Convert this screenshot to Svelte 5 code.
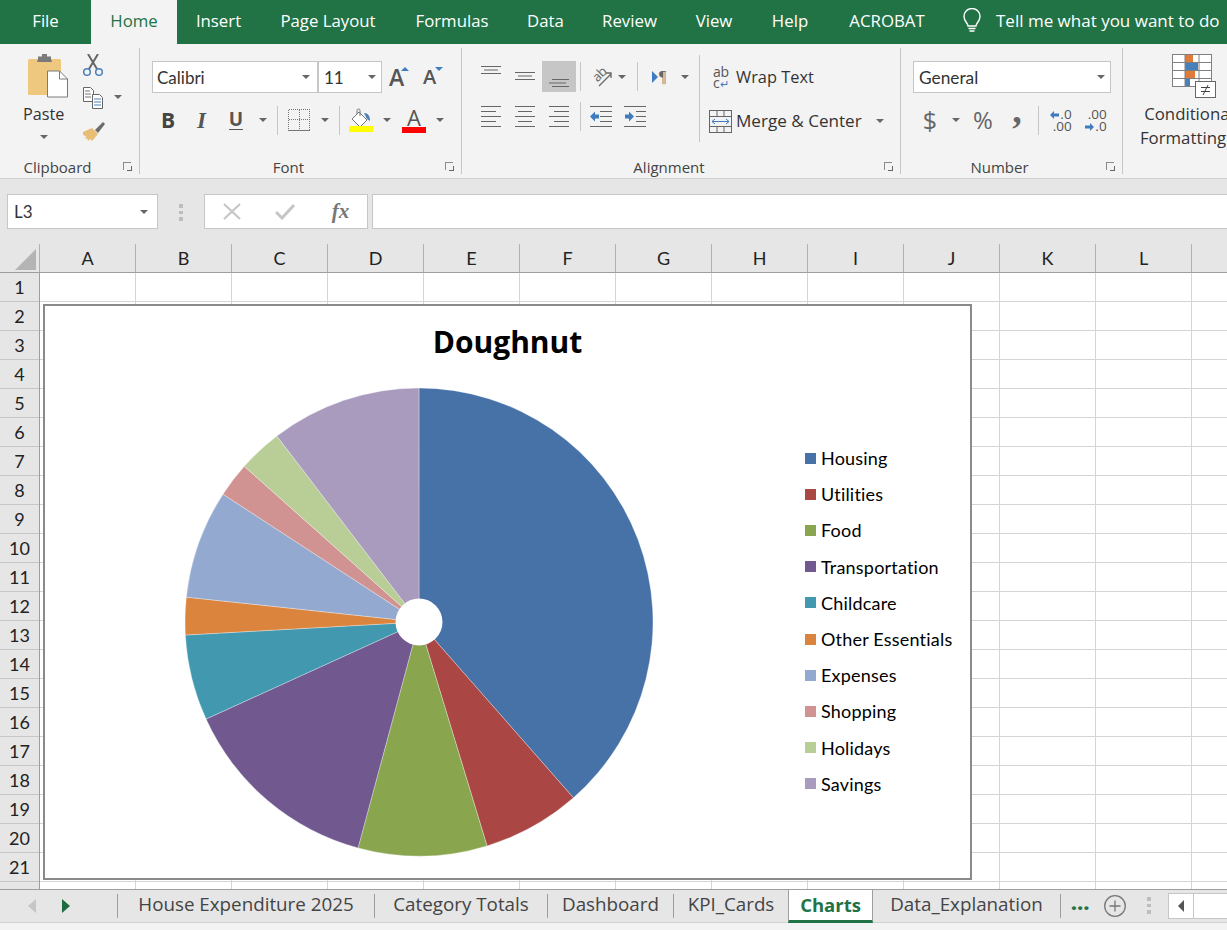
<script>
  const tabs = ['File','Home','Insert','Page Layout','Formulas','Data','Review','View','Help','ACROBAT'];
  const cols = 'ABCDEFGHIJKL'.split('');
  const rows = Array.from({length:21},(_,i)=>i+1);
  const slices = [
    ['Housing','#4672a8',138.7],['Utilities','#aa4643',163.1],['Food','#89a54e',195.1],
    ['Transportation','#71588f',245.5],['Childcare','#4198af',266.8],['Other Essentials','#db843d',276.1],
    ['Expenses','#93a9cf',303.1],['Shopping','#d19392',311.7],['Holidays','#b9cd96',322.6],['Savings','#a99bbd',360]
  ];
  const R = 234, cx = 376, cy = 318;
  const pt = a => { const r = a*Math.PI/180; return `${(cx+R*Math.sin(r)).toFixed(2)} ${(cy-R*Math.cos(r)).toFixed(2)}`; };
  const wedges = slices.map((s,i)=>{
    const from = i ? slices[i-1][2] : 0, to = s[2];
    const end = to===360 ? 359.99 : to;
    return { name:s[0], color:s[1], d:`M${cx} ${cy}L${pt(from)}A${R} ${R} 0 ${end-from>180?1:0} 1 ${pt(end)}Z` };
  });
  const sheets = [
    ['House Expenditure 2025','w257'],['Category Totals','w173'],['Dashboard','w126'],['KPI_Cards','w115']
  ];
</script>

<div class="app">
  <nav class="tabs">
    {#each tabs as t}
      <div class="tab" class:active={t==='Home'}>{t}</div>
    {/each}
    <div class="tell">
      <svg width="22" height="26" viewBox="0 0 22 26" fill="none" stroke="#fff" stroke-width="1.4"><path d="M7 18c0-3-4-4.500-4-9.500a8 8 0 0 1 16 0C19 13.500 15 15 15 18Z"/><path d="M7.500 20.500h7M8.500 23h5"/></svg>
      <span>Tell me what you want to do</span>
    </div>
  </nav>

  <section class="ribbon">
    <div class="group g-clip">
      <div class="gbody clip-body">
        <div class="paste">
          <svg width="42" height="44" viewBox="0 0 42 44"><rect x="1" y="5" width="33" height="36" rx="1.500" fill="#edc87e"/><path d="M11 5V2.500h4V0h5v2.500h4V5l1 3H10Z" fill="#7a7a7a"/><path d="M20.500 17h12l8 8v18h-20Z" fill="#fff" stroke="#7a7a7a" stroke-width="1"/><path d="M32.500 17v8h8" fill="none" stroke="#7a7a7a"/></svg>
          <span class="t15">Paste</span>
          <i class="dd"></i>
        </div>
        <div class="clip-tools">
          <svg width="22" height="22" viewBox="0 0 22 22" fill="none"><path d="M6 0l9 15M16 0L7 15" stroke="#666" stroke-width="2"/><circle cx="5" cy="18" r="3.300" stroke="#4a80ba" stroke-width="1.500"/><circle cx="17" cy="18" r="3.300" stroke="#4a80ba" stroke-width="1.500"/></svg>
          <div class="copy">
            <svg width="22" height="22" viewBox="0 0 22 22" fill="#fff" stroke="#666"><path d="M1.500.5h7l3 3v11h-10Z"/><path d="M3 4h5M3 7h6M3 10h6" stroke-width=".9"/><path d="M10.500 7.500h7l3 3v11h-10Z"/><path d="M12 12h7M12 15h7M12 18h7" stroke="#4a80ba"/></svg>
            <i class="dd"></i>
          </div>
          <svg class="brush" width="24" height="21" viewBox="0 0 24 21"><path d="M1 11l9-4 6 6-6 7-2-2-2 2-1-3-2 1 1-3-3-1Z" fill="#e9bd73"/><path d="M13 9l8-8 2 2-7 9Z" fill="#6b6b6b"/></svg>
        </div>
      </div>
      <footer class="glabel"><span>Clipboard</span><b class="launch"></b></footer>
    </div>

    <div class="group g-font">
      <div class="gbody">
        <div class="font-top">
          <div class="box fname"><span class="cal">Calibri</span><i class="dd"></i></div>
          <div class="box fsize"><span class="cal">11</span><i class="dd"></i></div>
          <div class="grow">A<b class="up"></b></div>
          <div class="shrink">A<b class="down"></b></div>
        </div>
        <div class="font-bot">
          <span class="fb b">B</span>
          <span class="fb it">I</span>
          <span class="fb un">U</span>
          <i class="dd"></i>
          <u class="sep"></u>
          <svg width="22" height="22" viewBox="0 0 22 22" fill="none" stroke="#777" stroke-dasharray="1 1" shape-rendering="crispEdges"><path d="M.5.500h21v20M.5.500v20M11 .5v20M.5 10.500h21"/><path d="M0 21.500h22" stroke-dasharray="none"/></svg>
          <i class="dd"></i>
          <u class="sep"></u>
          <svg width="24" height="24" viewBox="0 0 24 24"><path d="M10 4l8 8-7 7-8-8Z" fill="#fff" stroke="#777"/><path d="M8 6V2.500a1.500 1.500 0 0 1 3 0V8" fill="none" stroke="#777"/><path d="M15 5c4 0 6 3 6 8l-3-2Z" fill="#4a80ba"/><rect y="18" width="24" height="6" fill="#ff0"/></svg>
          <i class="dd"></i>
          <div class="fcolor">A<b></b></div>
          <i class="dd"></i>
        </div>
      </div>
      <footer class="glabel"><span>Font</span><b class="launch"></b></footer>
    </div>

    <div class="group g-align">
      <div class="gbody align-body">
        <div class="align-left">
          <div class="al-top">
            <svg width="20" height="10" viewBox="0 0 20 10" stroke="#666"><path d="M0 1.500h20M3 5h14M0 8.500h20"/></svg>
            <svg width="20" height="10" class="lower1" viewBox="0 0 20 10" stroke="#666"><path d="M0 1.500h20M3 5h14M0 8.500h20"/></svg>
            <div class="al-active"><svg width="20" height="10" viewBox="0 0 20 10" stroke="#666"><path d="M3 1.500h17M0 5h17M3 8.500h17"/></svg></div>
            <u class="sep"></u>
            <div class="orient">
              <span>ab</span>
              <svg width="20" height="20" viewBox="0 0 20 20" fill="none" stroke="#666" stroke-width="1.300"><path d="M7 19L19 7M14 6h5v5"/></svg>
            </div>
            <i class="dd"></i>
            <u class="sep"></u>
            <div class="rtl"><b></b>¶</div>
            <i class="dd"></i>
          </div>
          <div class="al-bot">
            <svg width="20" height="22" viewBox="0 0 20 22" stroke="#666"><path d="M0 .5h20M0 5.500h15M0 10.500h20M0 15.500h15M0 20.500h20"/></svg>
            <svg width="20" height="22" viewBox="0 0 20 22" stroke="#666"><path d="M0 .5h20M3 5.500h14M0 10.500h20M3 15.500h14M0 20.500h20"/></svg>
            <svg width="20" height="22" viewBox="0 0 20 22" stroke="#666"><path d="M0 .5h20M5 5.500h15M0 10.500h20M5 15.500h15M0 20.500h20"/></svg>
            <u class="sep"></u>
            <svg width="22" height="22" viewBox="0 0 22 22"><path d="M0 .5h22M10 5.500h12M10 10.500h12M10 15.500h12M0 20.500h22" stroke="#666"/><path d="M0 10.500l5-5v3h4v4H5v3Z" fill="#3f7cbf"/></svg>
            <svg width="22" height="22" viewBox="0 0 22 22"><path d="M0 .5h22M12 5.500h10M12 10.500h10M12 15.500h10M0 20.500h22" stroke="#666"/><path d="M10 10.500l-5-5v3H1v4h4v3Z" fill="#3f7cbf"/></svg>
          </div>
        </div>
        <u class="sep tall"></u>
        <div class="align-right">
          <div class="wrap">
            <span class="abc">ab<br>c<em>↵</em></span>
            <span class="t15 wt">Wrap Text</span>
          </div>
          <div class="merge">
            <svg width="23" height="23" viewBox="0 0 23 23" fill="none" stroke="#666"><rect x=".5" y=".5" width="22" height="22"/><path d="M0 6.500h23M0 16.500h23M8 0v6M15 0v6M8 17v6M15 17v6"/><path d="M3 11.500h17M3 11.500l3-2.500M3 11.500l3 2.500M20 11.500l-3-2.500M20 11.500l-3 2.500" stroke="#3f7cbf"/></svg>
            <span class="t15 mt">Merge &amp; Center</span>
            <i class="dd"></i>
          </div>
        </div>
      </div>
      <footer class="glabel"><span>Alignment</span><b class="launch"></b></footer>
    </div>

    <div class="group g-num">
      <div class="gbody">
        <div class="box general"><span class="gen">General</span><i class="dd"></i></div>
        <div class="num-bot">
          <span class="sym dollar">$</span>
          <i class="dd"></i>
          <span class="sym pct">%</span>
          <span class="sym comma">,</span>
          <u class="sep"></u>
          <div class="dec"><span><svg width="9" height="8" viewBox="0 0 9 8"><path d="M0 4l4-4v2.500h5v3H4V8Z" fill="#3f7cbf"/></svg>.0</span><span>.00</span></div>
          <div class="dec"><span>.00</span><span><svg width="9" height="8" viewBox="0 0 9 8"><path d="M9 4L5 0v2.500H0v3h5V8Z" fill="#3f7cbf"/></svg>.0</span></div>
        </div>
      </div>
      <footer class="glabel"><span>Number</span><b class="launch"></b></footer>
    </div>

    <div class="g-style">
      <svg width="46" height="46" viewBox="0 0 46 46" fill="none">
        <rect x=".5" y=".5" width="39" height="32" fill="#fff" stroke="#808080"/>
        <rect x="13" y="1" width="8" height="7" fill="#e07b39"/><rect x="13" y="9" width="13" height="7" fill="#4a80ba"/><rect x="13" y="17" width="10" height="7" fill="#e07b39"/><rect x="13" y="25" width="5" height="7" fill="#4a80ba"/>
        <path d="M0 8.500h40M0 16.500h40M0 24.500h40M13 0v33M27 0v33" stroke="#808080"/>
        <rect x="23.500" y="27.500" width="20" height="16" fill="#fff" stroke="#666"/>
        <path d="M29 33.500h9M29 37.500h9M31 41l5-10" stroke="#444"/>
      </svg>
      <span class="t15 cf1">Conditional</span>
      <span class="t15 cf2">Formatting</span>
    </div>
  </section>

  <section class="fbar">
    <div class="box namebox"><span>L3</span><i class="dd"></i></div>
    <div class="grip"><i></i><i></i><i></i></div>
    <div class="fxbox">
      <svg width="20" height="18" viewBox="0 0 20 18" stroke="#c6c6c6" stroke-width="2.200"><path d="M2 1l16 15M18 1L2 16"/></svg>
      <svg width="20" height="16" viewBox="0 0 20 16" fill="none" stroke="#c6c6c6" stroke-width="3"><path d="M1 8l6 6L19 1"/></svg>
      <span class="fx">fx</span>
    </div>
    <div class="finput"></div>
  </section>

  <div class="colhead">
    <div class="corner"><b></b></div>
    {#each cols as c}<div class="ch">{c}</div>{/each}
    <div class="ch"></div>
  </div>

  <main class="sheet">
    <div class="rowhead">
      {#each rows as r}<div class="rh">{r}</div>{/each}
    </div>
    <div class="cells">
      <article class="chart">
        <h1>Doughnut</h1>
        <svg class="pie" width="929" height="575" viewBox="0 0 929 575">
          {#each wedges as w}<path d={w.d} fill={w.color} stroke="#fff" stroke-opacity=".45" stroke-width=".7"/>{/each}
          <circle cx={cx} cy={cy} r="23.500" fill="#fff"/>
        </svg>
        <ul class="legend">
          {#each wedges as w}
            <li><i style:background={w.color}></i>{w.name}</li>
          {/each}
        </ul>
      </article>
    </div>
  </main>

  <footer class="sheets">
    <div class="nav">
      <svg width="8" height="14" viewBox="0 0 8 14"><path d="M8 0v14L0 7Z" fill="#c6c6c6"/></svg>
      <svg width="8" height="14" viewBox="0 0 8 14"><path d="M0 0v14l8-7Z" fill="#1e6b41"/></svg>
    </div>
    {#each sheets as s}<div class="st {s[1]}">{s[0]}</div>{/each}
    <div class="st current">Charts</div>
    <div class="st w188">Data_Explanation</div>
    <div class="more">...</div>
    <svg class="plus" width="22" height="22" viewBox="0 0 22 22" fill="none" stroke="#777" stroke-width="1.300"><circle cx="11" cy="11" r="10.300"/><path d="M11 5.500v11M5.500 11h11"/></svg>
    <div class="grip g2"><i></i><i></i><i></i></div>
    <div class="hscroll"><span class="sl"><svg width="6" height="12" viewBox="0 0 6 12"><path d="M6 0v12L0 6Z" fill="#555"/></svg></span><span class="thumb"></span></div>
  </footer>
  <div class="status"></div>
</div>

<style>
  :global(body){margin:0;background:#fff}
  .app{width:1227px;height:930px;overflow:hidden;display:flex;flex-direction:column;font-family:"Open Sans","Noto Sans",sans-serif;color:#333}
  .tabs{display:grid;grid-template-columns:91px 86px 83px 136px 112px 75px 93px 76px 76px 118px 1fr;height:44px;background:#217346;flex:none}
  .tab{display:flex;align-items:center;justify-content:center;color:#fff;font-size:16.800px;padding-bottom:3px;box-sizing:border-box;white-space:nowrap}
  .tab.active{background:#f3f3f3;color:#217346}
  .tell{display:flex;align-items:center;gap:13px;padding-left:15px;color:#fff;font-size:17px;white-space:nowrap;padding-bottom:3px;overflow:hidden}

  .ribbon{display:flex;flex:none;background:#f3f3f3;border-bottom:1px solid #d2d2d2;padding-top:4px;box-sizing:content-box;height:130px;overflow:hidden}
  .group{display:flex;flex-direction:column;border-right:1px solid #c6c6c6;height:126px;box-sizing:content-box;flex:none}
  .gbody{height:108px;box-sizing:border-box;flex:none}
  .glabel{display:flex;align-items:center;height:22px;font-size:15px;color:#444;flex:none}
  .glabel span{flex:1;text-align:center}
  .launch{width:24px;height:22px;position:relative;flex:none}
  .launch::before{content:"";position:absolute;left:8px;top:6px;width:7px;height:7px;border:solid #8a8a8a;border-width:1px 0 0 1px}
  .launch::after{content:"";position:absolute;left:12px;top:10px;width:4px;height:4px;border:solid #666;border-width:0 1px 1px 0}
  .dd{display:block;width:0;height:0;border:4px solid transparent;border-top:4px solid #666;border-bottom:0;flex:none}
  .t15{font-size:16.800px;color:#333;white-space:nowrap;line-height:24px}
  .wt{font-size:16.400px}
  .mt{font-size:17.100px}
  .sep{display:block;width:1px;height:29px;background:#c6c6c6;justify-self:center;text-decoration:none}
  .box{display:flex;align-items:center;justify-content:space-between;background:#fff;border:1px solid #c6c6c6;box-sizing:border-box}
  .cal{font-family:Lato,"Liberation Sans",sans-serif}

  .g-clip{width:139px}
  .clip-body{display:flex;padding:6px 0 0 23px}
  .paste{display:flex;flex-direction:column;align-items:flex-start;width:59px}
  .paste svg{margin-left:4px;flex:none}
  .paste span{margin-top:4px;font-size:16.200px}
  .paste .dd{margin:9px 0 0 17px}
  .clip-tools{display:flex;flex-direction:column;gap:11px;align-items:flex-start}
  .copy{display:flex;align-items:center;gap:10px}
  .copy .dd{margin-top:-3px}
  .brush{margin-top:1px}

  .g-font{padding-left:12px;width:309px}
  .g-font .glabel,.g-num .glabel{margin-left:-12px}
  .font-top{display:flex;padding-top:13px;align-items:center;height:32px;box-sizing:content-box}
  .fname{width:166px;height:32px;padding:0 7px 0 4px;font-size:17px}
  .fsize{width:64px;height:32px;padding:0 5px;font-size:17px}
  .grow,.shrink{position:relative;font-weight:600;color:#555}
  .grow{font-size:23px;margin-left:7px;width:33px;line-height:30px}
  .shrink{font-size:20px;margin-left:1px;line-height:30px}
  .up,.down{position:absolute;left:12px;top:5px;border:4px solid transparent}
  .up{border-bottom:4px solid #3f7cbf;border-top:0}
  .down{border-top:4px solid #3f7cbf;border-bottom:0}
  .font-bot{display:grid;grid-template-columns:32px 35px 34px 19px 10px 33px 19px 10px 34px 18px 36px 16px;place-items:center;height:30px;margin-top:12px}
  .fb{font-size:21px;color:#555;line-height:1}
  .b{font-weight:700;color:#444}
  .it{font-family:"Liberation Serif",serif;font-style:italic;font-weight:700;font-size:23px}
  .un{font-weight:700;border-bottom:1.500px solid #555;line-height:19px;font-size:19px}
  .fcolor{display:flex;flex-direction:column;align-items:center;font-size:22px;line-height:20px;font-weight:500;color:#555}
  .fcolor b{width:24px;height:6px;background:#f00;display:block}

  .g-align{width:438px}
  .align-body{display:flex;padding-left:12px}
  .align-left{width:225px}
  .al-top{display:grid;grid-template-columns:34px 34px 34px 8px 8px 20px 20px 10px 34px 18px;place-items:center;height:31px;margin-top:13px}
  .al-top>svg:first-child{margin-top:-14px}
  .lower1{margin-top:-1px}
  .orient{grid-column:6;position:relative;width:20px;height:20px}
  .orient span{position:absolute;left:0;top:0;font-size:13px;line-height:14px;color:#666;transform:rotate(-45deg);letter-spacing:-.5px;transform-origin:50% 50%}
  .orient svg{position:absolute;left:0;top:0}
  .al-active{width:34px;height:31px;background:#c6c6c6;display:flex;align-items:center;justify-content:center;padding-top:12px;box-sizing:border-box}
  .rtl{display:flex;align-items:center;gap:1px;font-size:16px;color:#666;font-family:"Liberation Serif",serif}
  .rtl b{border:solid transparent;border-width:6px 0 6px 6px;border-left-color:#3f7cbf}
  .al-bot{display:grid;grid-template-columns:34px 34px 34px 8px 34px 34px;place-items:center;height:26px;margin-top:10px}
  .sep.tall{height:87px;margin:7px 0 0 0;align-self:flex-start}
  .align-right{padding:13px 0 0 9px;display:flex;flex-direction:column}
  .wrap{display:flex;align-items:center;height:32px;padding-left:4px;gap:7px}
  .abc{font-size:14px;line-height:11px;color:#555;width:16px;white-space:nowrap;letter-spacing:-.2px}
  .abc em{font-style:normal;color:#3f7cbf;font-size:11px}
  .merge{display:flex;align-items:center;height:32px;margin-top:12px;gap:4px}
  .merge .dd{margin-left:10px}

  .g-num{padding-left:12px;width:209px}
  .general{width:198px;height:32px;margin-top:13px;padding:0 5px;font-size:17.300px}
  .gen{font-family:Lato,sans-serif}
  .num-bot{display:grid;grid-template-columns:34px 18px 36px 32px 10px 36px 34px;place-items:center;height:30px;margin-top:12px}
  .sym{font-size:25px;color:#666;line-height:1}
  .pct{font-size:24px}
  .comma{font-weight:700;font-size:38px;line-height:30px;margin-top:-20px;font-family:"Liberation Serif",serif}
  .dec{display:flex;flex-direction:column;align-items:flex-end;font-size:13.500px;line-height:12px;color:#555}
  .dec svg{margin-right:1px}

  .g-style{flex:none;display:flex;flex-direction:column;align-items:center;width:124px;padding-top:6px}
  .g-style svg{margin:0 0 2px 19px;flex:none}
  .cf1{margin-left:8px}
  .cf2{margin-left:-4px}

  .fbar{display:flex;height:65px;flex:none;background:#e6e6e6;padding:15px 0 0 7px;box-sizing:border-box;align-items:flex-start}
  .namebox{width:151px;height:35px;padding:0 9px 0 6px;font-family:Lato,sans-serif;font-size:17px;color:#333}
  .grip{display:flex;flex-direction:column;gap:3px;width:46px;align-items:center;padding-top:10px}
  .grip i{width:3.500px;height:3.500px;background:#bdbdbd;display:block}
  .fxbox{display:grid;grid-template-columns:53px 54px 57px;place-items:center;width:164px;height:35px;box-sizing:border-box;background:#fff;border:1px solid #c6c6c6}
  .fx{font-family:"Liberation Serif",serif;font-style:italic;font-size:21px;color:#777;font-weight:700}
  .finput{flex:1;height:35px;margin-left:4px;background:#fff;border:1px solid #c6c6c6;box-sizing:border-box;border-right:0}

  .colhead{display:grid;grid-template-columns:40px repeat(13,96px);flex:none;background:#e6e6e6;border-bottom:1px solid #9e9e9e;height:28px}
  .corner{position:relative;border-right:1px solid #b1b1b1;box-sizing:border-box}
  .corner b{position:absolute;right:3px;bottom:2px;width:0;height:0;border-style:solid;border-width:0 0 21px 21px;border-color:transparent transparent #b4b4b4 transparent}
  .ch{display:flex;align-items:center;justify-content:center;border-right:1px solid #b1b1b1;box-sizing:border-box;font:18px Lato,sans-serif;color:#222}

  .sheet{display:flex;flex:1;min-height:0;overflow:hidden}
  .rowhead{width:40px;flex:none;background:#e6e6e6;border-right:1px solid #9e9e9e;box-sizing:border-box}
  .rh{height:29px;display:flex;align-items:center;justify-content:center;box-sizing:border-box;border-bottom:1px solid #c6c6c6;font:18px Lato,sans-serif;color:#222}
  .cells{flex:1;position:relative;background-color:#fff;background-image:linear-gradient(to left,#d4d4d4 1px,transparent 1px),linear-gradient(to top,#d4d4d4 1px,transparent 1px);background-size:96px 100%,100% 29px}
  .chart{position:absolute;left:3px;top:31px;width:929px;height:576px;box-sizing:border-box;background:#fff;border:2px solid #8a8a8a}
  .chart h1{margin:0;position:absolute;left:0;right:0;top:15px;text-align:center;font:700 30px/42px "Open Sans",sans-serif;color:#000}
  .pie{position:absolute;left:-2px;top:-2px}
  .legend{position:absolute;left:760px;top:134px;margin:0;padding:0;list-style:none;font:18px/36.200px Lato,sans-serif;letter-spacing:.2px;color:#000}
  .legend li{display:flex;align-items:center;gap:5px;white-space:nowrap}
  .legend i{width:11px;height:11px;display:block}

  .sheets{display:flex;align-items:stretch;height:34px;flex:none;background:#e6e6e6;border-top:1px solid #9e9e9e;border-bottom:1px solid #d2d2d2;box-sizing:border-box}
  .nav{width:118px;display:flex;align-items:center;gap:26px;padding-left:28px;box-sizing:border-box;flex:none;border-right:1px solid #9e9e9e;margin:4px 0}
  .st{display:flex;align-items:center;justify-content:center;font-size:18.800px;color:#444;white-space:nowrap;flex:none;border-right:1px solid #9e9e9e;box-sizing:border-box;margin:4px 0;padding-bottom:4px}
  .w257{width:257px}.w173{width:173px}.w126{width:126px}.w115{width:115px}.w188{width:188px}
  .current{width:85px;margin:-1px 0 0 -1px;background:#fff;color:#217346;font-weight:700;border:solid #9e9e9e;border-width:1px 1px 0 1px;border-bottom:3px solid #217346;height:34px;font-size:18.500px;padding-bottom:1px}
  .more{color:#217346;font-weight:800;font-size:20px;width:42px;padding-left:10px;box-sizing:border-box;line-height:26px;flex:none;letter-spacing:.5px}
  .plus{align-self:center;flex:none;margin-left:1px}
  .g2{width:26px;flex:none;margin-left:10px;padding-top:7px}
  .hscroll{display:flex;height:26px;align-self:center;flex:1;background:#fff;border:1px solid #c6c6c6;border-right:0;box-sizing:border-box;margin-left:6px}
  .sl{width:24px;display:flex;align-items:center;justify-content:center;border-right:1px solid #c6c6c6}
  .status{flex:none;height:7px;background:#f3f3f3}
</style>
